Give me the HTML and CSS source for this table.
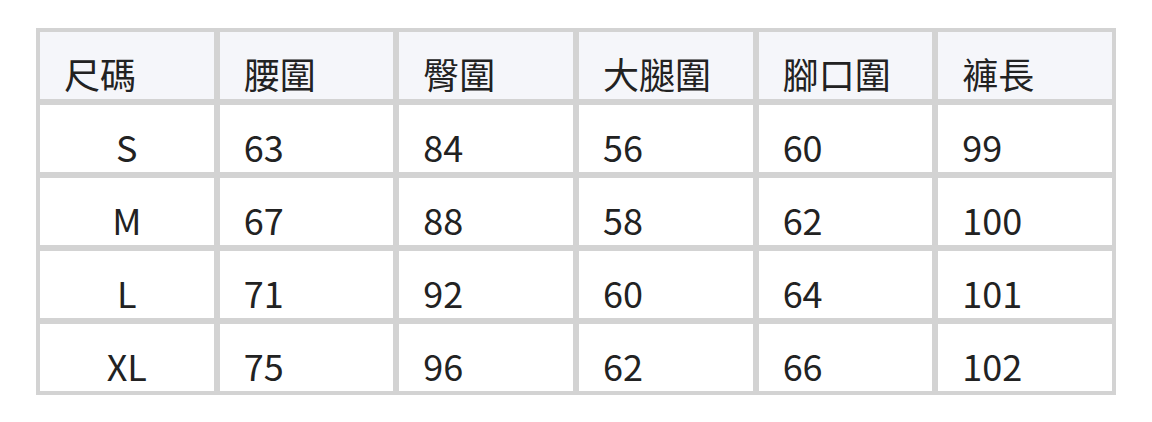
FILE: index.html
```html
<!DOCTYPE html>
<html lang="zh-Hant">
<head>
<meta charset="utf-8">
<link rel="stylesheet" href="styles.css">
</head>
<body>
<div class="page">
<table class="size-table">
  <thead>
    <tr><th>尺碼</th><th>腰圍</th><th>臀圍</th><th>大腿圍</th><th>腳口圍</th><th>褲長</th></tr>
  </thead>
  <tbody>
    <tr><td class="size">S</td><td>63</td><td>84</td><td>56</td><td>60</td><td>99</td></tr>
    <tr><td class="size">M</td><td>67</td><td>88</td><td>58</td><td>62</td><td>100</td></tr>
    <tr><td class="size">L</td><td>71</td><td>92</td><td>60</td><td>64</td><td>101</td></tr>
    <tr><td class="size">XL</td><td>75</td><td>96</td><td>62</td><td>66</td><td>102</td></tr>
  </tbody>
</table>
</div>
</body>
</html>
```
FILE: styles.css
```css
html, body {
  margin: 0;
  padding: 0;
  background: #ffffff;
}
.page {
  padding: 28px 0 0 36px;
}
.size-table {
  width: 1080px;
  table-layout: fixed;
  border-collapse: separate;
  border-spacing: 2px;
  background: #d3d3d3;
  font-family: "Noto Sans CJK TC", "Noto Sans", sans-serif;
  font-size: 36px;
  color: #222222;
}
.size-table th,
.size-table td {
  border: 2px solid #d3d3d3;
  height: 40px;
  padding: 21px 20px 6px 24px;
  line-height: 40px;
  text-align: left;
  font-weight: 400;
  vertical-align: top;
  background: #ffffff;
  white-space: nowrap;
}
.size-table th {
  background: #f5f6fa;
}
.size-table td.size {
  text-align: center;
  padding-left: 0;
  padding-right: 0;
}
```
